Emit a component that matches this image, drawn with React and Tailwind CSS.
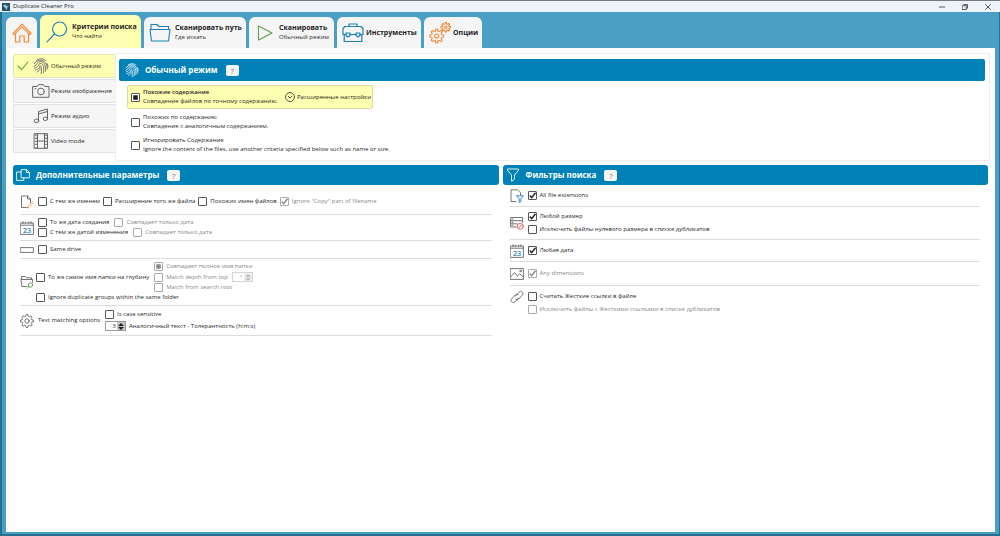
import React, { useState } from 'react';

const BLUE = '#1b7fb5';
const GRAY = '#666666';

const gearPath = (cx, cy, outer, inner, teeth = 8) => {
  const pts = [];
  const step = (Math.PI * 2) / teeth;
  for (let i = 0; i < teeth; i++) {
    const a = i * step;
    [[-0.3, inner], [-0.18, outer], [0.18, outer], [0.3, inner]].forEach(([k, r]) => {
      pts.push(`${(cx + Math.cos(a + k * step) * r).toFixed(2)} ${(cy + Math.sin(a + k * step) * r).toFixed(2)}`);
    });
  }
  return `M${pts.join('L')}Z`;
};

const Icon = ({ className = 'w-4 h-4', box = '0 0 16 16', color = GRAY, width = 1, children }) => (
  <svg viewBox={box} className={`shrink-0 ${className}`} fill="none" stroke={color} strokeWidth={width} strokeLinejoin="round" strokeLinecap="round" aria-hidden="true">
    {children}
  </svg>
);

const HomeIcon = () => (
  <Icon className="w-5 h-5" box="0 0 20 20" color="#f08a3c" width={1.2}>
    <path d="M1 10.5 10 1.2l9 9.3-1.2 1.2L10 3.8l-7.8 7.9z" />
    <path d="M3.5 11v8h4.3v-6h4.4v6h4.3v-8" />
  </Icon>
);

const SearchIcon = () => (
  <Icon className="w-[22px] h-[22px]" box="0 0 22 22" color={BLUE} width={1.1}>
    <circle cx="13.6" cy="8" r="7" />
    <path d="M8.6 13 1 20.8" />
  </Icon>
);

const FolderIcon = () => (
  <Icon className="w-[22px] h-5" box="0 0 22 20" color={BLUE} width={1.1}>
    <path d="M2.5 18 1 6.5h20L19.5 18zM2 6.5V1.5h6l2 2h9.5v3" />
  </Icon>
);

const PlayIcon = () => (
  <Icon className="w-4 h-4" color="#5fa04e" width={1.1}>
    <path d="M1.5 1v14L15 8z" />
  </Icon>
);

const ToolboxIcon = () => (
  <Icon className="w-[22px] h-5" box="0 0 22 20" color={BLUE} width={1.2}>
    <path d="M7 3.500V1h8v2.500M1 11.500v-6l2-2h16l2 2v6h-3M4 11.500H1M8 11.500h6" />
    <path d="M2.200 11.500v7h17.600v-7" />
    <path d="M4 10h4v2.500l-2 1.500-2-1.500zM14 10h4v2.500l-2 1.500-2-1.500z" />
  </Icon>
);

const GearsIcon = () => (
  <Icon className="w-[22px] h-[22px]" box="0 0 22 22" color="#f08a3c" width={1.1}>
    <path d={gearPath(7.7, 14, 7, 5.2)} />
    <circle cx="7.7" cy="14" r="2" />
    <path d={gearPath(16.8, 5.2, 4.8, 3.4)} />
    <circle cx="16.8" cy="5.2" r="1.2" />
  </Icon>
);

const FingerprintIcon = ({ color = GRAY, className }) => (
  <Icon className={className} color={color} width={0.9}>
    <path d="M3.6 2.4C6.2.2 10.2.2 12.6 2.6" />
    <path d="M1.400 5.600C3.600 1.400 9.800.900 12.500 4.700c1.300 1.900 1.800 4 1.700 6.600" />
    <path d="M1.200 8.200C4.200 7.800 3.400 3.600 7.500 3.600c4.400 0 5.400 4.500 4.900 9.700" />
    <path d="M1.600 10.200C6 9.600 4.700 5.500 7.600 5.500c3.200 0 3.600 4.800 2.800 9.300" />
    <path d="M2.500 12.100C6.600 11 6.400 9 7.200 7.500c1.500 1 1.600 4.500.9 8M4 14c2-.8 2.800-2 3.100-3.600" />
    <path d="M14.200 5.500c.6 1.200.8 2.400.8 3.600" />
  </Icon>
);

const CameraIcon = () => (
  <Icon className="w-[18px] h-[14px]" box="0 0 18 14">
    <path d="M1 2.500h4.200L6.500.700h5l1.300 1.800H17v10.800H1zM3 4.700h1" />
    <circle cx="9" cy="7.500" r="3.400" />
  </Icon>
);

const MusicIcon = () => (
  <Icon>
    <path d="M5.500 12.500v-9l9-2.500v9.500M5.500 6l9-2.500" />
    <ellipse cx="3.500" cy="12.800" rx="2.200" ry="1.800" />
    <ellipse cx="12.400" cy="10.800" rx="2.200" ry="1.800" />
  </Icon>
);

const FilmIcon = () => (
  <Icon>
    <path d="M1.500.700h13v14.600h-13zM4.500.700v14.600M11.500.700v14.600M4.500 8h7" />
    <path d="M3 1.500v13M13 1.500v13" strokeDasharray="1.300 1.800" strokeWidth="1.500" strokeLinecap="butt" />
  </Icon>
);

const CopyIcon = () => (
  <Icon className="w-[14px] h-3" box="0 0 14 12" color="#fff" width={0.9}>
    <path d="M5.500.600h5l2.900 2.800v5.400H5.500zM10.300.600v3h3" />
    <path d="M5.500 3H.600v8.400h7.200V8.800" />
  </Icon>
);

const FunnelIcon = () => (
  <Icon className="w-3 h-[14px]" box="0 0 12 14" color="#fff" width={0.9}>
    <path d="M.600 1h10.800v1.500L7.500 7v4.200l-3 2V7L.600 2.500z" />
  </Icon>
);

const RenameIcon = () => (
  <Icon className="w-[14px] h-[14px]" box="0 0 14 14" width={0.9}>
    <path d="M7.500 12.500H1.500V1h6l3 3v4M7.500 1v3h3" />
    <path d="m7.500 12.800.700-2.200 4-4 1.300 1.300-4 4z" stroke="#e8a55a" />
  </Icon>
);

const CalendarIcon = () => (
  <Icon className="w-[14px] h-[14px]" box="0 0 14 14" width={0.9}>
    <path d="M.600 2h12.800v11.400H.600zM.600 4.200h12.800M3 .600v2M11 .600v2M5.500 1.200v1M8.500 1.200v1" />
    <text x="7" y="12" textAnchor="middle" fontSize="7" fontFamily="Open Sans, sans-serif" fill={BLUE} stroke={BLUE} strokeWidth=".2">23</text>
  </Icon>
);

const DriveIcon = () => (
  <Icon className="w-[14px] h-[6px]" box="0 0 14 6" width={0.9}>
    <path d="M.600.600h12.800v4.800H.600z" />
  </Icon>
);

const FolderSearchIcon = () => (
  <Icon className="w-[14px] h-[14px]" box="0 0 14 14" width={0.9}>
    <path d="M7 11.500H2L.800 4.500h12l-.4 3M1.500 4.500v-3h4l1 1.300h5v1.700" />
    <circle cx="10.500" cy="10" r="2.200" stroke="#5fa04e" />
    <path d="m9 11.600-1.800 1.800" stroke="#5fa04e" />
  </Icon>
);

const GearIcon = () => (
  <Icon className="w-[14px] h-[14px]" box="0 0 14 14" width={0.9}>
    <path d={gearPath(7, 7, 6.5, 5)} />
    <circle cx="7" cy="7" r="2.200" />
  </Icon>
);

const FileFilterIcon = () => (
  <Icon className="w-[14px] h-[14px]" box="0 0 14 14" width={0.9}>
    <path d="M6 12.500H1V.800h6.500l3 3V6" />
    <path d="M6.700 6.800h6.600l-2.400 3v2.800l-1.700.800V9.800z" stroke={BLUE} />
  </Icon>
);

const SizeIcon = () => (
  <Icon className="w-[14px] h-[14px]" box="0 0 14 14" width={0.9}>
    <path d="M6.500 11H.600V1.500h12v5M.600 4.700h12M.600 7.800h6.500M2 3.100h1M2 6.200h1M2 9.300h1" />
    <circle cx="10.300" cy="10.300" r="3" stroke="#d9534a" />
    <path d="m9 11.600 2.600-2.600" stroke="#d9534a" />
  </Icon>
);

const ImageIcon = () => (
  <Icon className="w-[14px] h-3" box="0 0 14 12" width={0.9}>
    <path d="M.600.600h12.800v10.800H.600zM.600 9l4-4.500 2.600 3.500 2.400-2.200L13.400 9" />
    <circle cx="10.500" cy="3" r=".800" />
  </Icon>
);

const LinkIcon = () => (
  <Icon className="w-[14px] h-[14px]" box="0 0 14 14" width={0.9}>
    <path d="M5.500 6.200 9 2.200c2.200-2.200 5.200.600 3.400 2.800L8.800 9c-1 1-2.400.900-3.200.1" />
    <path d="M8.500 7.800 5 11.800c-2.200 2.200-5.200-.600-3.400-2.800L5.200 5c1-1 2.400-.900 3.200-.1" />
  </Icon>
);

// mark: "tick" for a checked box, "fill" for the square radio-like state
const Check = ({ label, on = false, mark = 'tick', disabled = false, children }) => {
  const [checked, setChecked] = useState(on);
  return (
    <label className={`flex items-center gap-[3px] whitespace-nowrap ${disabled ? 'text-[#888888]' : 'text-[#1f1f1f]'}`}>
      <span className="relative w-[9px] h-[9px] shrink-0">
        <input
          type="checkbox"
          checked={checked}
          disabled={disabled}
          onChange={e => setChecked(e.target.checked)}
          className="block appearance-none w-[9px] h-[9px] bg-white border border-[#555555] disabled:border-[#aaaaaa] rounded-[1px]"
        />
        {checked && (
          <svg viewBox="0 0 9 9" className="absolute inset-0 w-[9px] h-[9px] pointer-events-none" fill="none" stroke="currentColor" strokeWidth="1.4">
            {mark === 'tick' ? <path d="M1.800 4.500 3.700 6.600 7.500 1.800" /> : <path d="M2.500 2.500h4v4h-4z" fill="currentColor" strokeWidth=".5" />}
          </svg>
        )}
      </span>
      {children || <span>{label}</span>}
    </label>
  );
};

const Spinner = ({ value, label, disabled = false }) => (
  <span className={`flex w-[21px] h-[10px] border ${disabled ? 'border-[#d5d5d5] text-[#bbbbbb]' : 'border-[#999999]'}`}>
    <input type="number" defaultValue={value} aria-label={label} disabled={disabled}
      className="w-[11px] min-w-0 bg-white text-right pr-px leading-[8px] [appearance:textfield] [&::-webkit-inner-spin-button]:appearance-none" />
    <span className={`flex-1 flex flex-col ${disabled ? 'bg-[#f0f0f0]' : 'bg-[#c8c8c8]'}`}>
      <button type="button" disabled={disabled} aria-label={`${label} +`} className="flex-1 flex items-center justify-center">
        <svg viewBox="0 0 6 3" className="w-[6px] h-[3px]" fill="currentColor"><path d="M3 0 6 3H0z" /></svg>
      </button>
      <button type="button" disabled={disabled} aria-label={`${label} -`} className="flex-1 flex items-center justify-center">
        <svg viewBox="0 0 6 3" className="w-[6px] h-[3px]" fill="currentColor"><path d="M0 0h6L3 3z" /></svg>
      </button>
    </span>
  </span>
);

const Tab = ({ icon, title, sub, active, className = '' }) => (
  <button type="button" className={`flex items-center text-left rounded-t-[6px] whitespace-nowrap ${active ? 'h-[33px] bg-[#ffffb2]' : 'h-[31px] bg-[#f5f5f5]'} ${className}`}>
    {icon}
    {title && (
      <span className="flex flex-col">
        <span className="text-[7px] leading-[10px] font-bold">{title}</span>
        {sub && <span className="text-[6px] leading-[9px]">{sub}</span>}
      </span>
    )}
  </button>
);

const SectionHeader = ({ icon, title, className = '' }) => (
  <div className={`flex items-center bg-[#0082b8] text-white ${className}`}>
    <span className="flex w-[14px] shrink-0 justify-center mr-[6px]">{icon}</span>
    <h2 className="text-[8px] leading-3 font-bold">{title}</h2>
    <button type="button" aria-label="?" className="ml-2 w-[13px] h-[11px] rounded-[2px] bg-[#f5f5f5] text-[#777777] text-[8px] leading-[11px]">?</button>
  </div>
);

const Mode = ({ icon, label, active }) => (
  <button type="button" className={`flex items-center h-6 border border-r-0 rounded-l-[2px] whitespace-nowrap text-left ${active ? 'bg-[#ffffb2] border-[#e4e4b8]' : 'bg-[#f5f5f5] border-[#e2e2e2]'}`}>
    <span className="w-[18px] flex justify-center">
      {active && <Icon className="w-3 h-[10px]" box="0 0 12 10" color="#5fa04e" width={1.1}><path d="m1 5 3.500 3.700L11 1" /></Icon>}
    </span>
    <span className="w-[18px] flex justify-center mr-px">{icon}</span>
    {label}
  </button>
);

const Row = ({ icon, className = '', children }) => (
  <div className={`flex items-center border-b border-[#dcdcdc] ${className}`}>
    <span className="w-[14px] mr-1 shrink-0 flex justify-center">{icon}</span>
    {children}
  </div>
);

export default function App() {
  return (
    <div className="min-h-screen flex flex-col bg-[#4a9fc6] border-l-2 border-b-2 border-r border-[#27708f] font-['Open_Sans','Noto_Sans',sans-serif] text-[6px] leading-[9px] text-[#1f1f1f]">
      <header className="-ml-0.5 -mr-px flex items-center h-3 shrink-0 bg-[#eef3f8] border-t border-[#777783] pl-0.5">
        <svg viewBox="0 0 9 9" className="w-2 h-2" aria-hidden="true">
          <path d="M0 0h9v9H0z" fill="#244d69" />
          <path d="m1 3 3-1.500 1 2 3-.5-2 2-.5 3-2-2.500z" fill="#9fc5dc" />
        </svg>
        <h1 className="ml-[3px] flex-1">Duplicate Cleaner Pro</h1>
        <div className="flex items-center gap-[17px] pr-[9px]">
          <button type="button" aria-label="Свернуть"><Icon className="w-[6px] h-[6px]" box="0 0 6 6" color="#333" width={0.8}><path d="M0 3h6" /></Icon></button>
          <button type="button" aria-label="Восстановить"><Icon className="w-[6px] h-[6px]" box="0 0 6 6" color="#333" width={0.8}><path d="M.500 1.700h3.800v3.800H.500zM1.800.500h3.700v3.700" /></Icon></button>
          <button type="button" aria-label="Закрыть"><Icon className="w-[6px] h-[6px]" box="0 0 6 6" color="#333" width={0.8}><path d="m.500.500 5 5M5.500.500l-5 5" /></Icon></button>
        </div>
      </header>

      <nav className="flex items-end h-9 shrink-0 pl-1 gap-[3px]">
        <Tab icon={<HomeIcon />} className="w-[31px] justify-center" />
        <Tab active icon={<SearchIcon />} title="Критерии поиска" sub="Что найти" className="w-[101px] pl-[6px] gap-1" />
        <Tab icon={<FolderIcon />} title="Сканировать путь" sub="Где искать" className="w-[102px] pl-[5px] gap-1" />
        <Tab icon={<PlayIcon />} title="Сканировать" sub="Обычный режим" className="w-[85px] pl-2 gap-[6px]" />
        <Tab icon={<ToolboxIcon />} title="Инструменты" className="w-[84px] pl-[5px] gap-[2px]" />
        <Tab icon={<GearsIcon />} title="Опции" className="w-[58px] pl-[5px] gap-[2px]" />
      </nav>

      <main className="flex-1 bg-white mx-1 mb-0.5 pl-[7px] pr-[5px] pt-[5px]">
        {/* scan mode */}
        <div className="flex">
          <div className="w-[102px] shrink-0 flex flex-col gap-px pt-px">
            <Mode active icon={<FingerprintIcon />} label="Обычный режим" />
            <Mode icon={<CameraIcon />} label="Режим изображения" />
            <Mode icon={<MusicIcon />} label="Режим аудио" />
            <Mode icon={<FilmIcon />} label="Video mode" />
          </div>
          <section className="flex-1 border border-[#eeeeee] px-[3px] pt-[5px] pb-[6px]">
            <SectionHeader icon={<FingerprintIcon color="#fff" className="w-[14px] h-[14px]" />} title="Обычный режим" className="h-[22px] pl-[6px] rounded-[2px] mr-px" />
            <div className="ml-2 mt-1 flex w-[246px] h-6 items-center border border-[#dcdca0] bg-[#ffffb2] rounded-[2px] pl-[3px]">
              <div className="w-[154px]">
                <Check on mark="fill">
                  <span><b className="font-semibold">Похожие содержание</b><br />Совпадение файлов по точному содержанию.</span>
                </Check>
              </div>
              <button type="button" className="flex items-center gap-[2px] whitespace-nowrap">
                <Icon className="w-[10px] h-[10px]" box="0 0 10 10" color="#333" width={0.8}>
                  <circle cx="5" cy="5" r="4.500" />
                  <path d="m3.300 4.300 1.700 1.700 1.700-1.700" />
                </Icon>
                Расширенные настройки
              </button>
            </div>
            <div className="ml-3 mt-1 flex flex-col gap-[5px]">
              <Check><span>Похожих по содержанию<br />Совпадение с аналогичным содержанием.</span></Check>
              <Check><span>Игнорировать Содержание<br />Ignore the content of the files, use another criteria specified below such as name or size.</span></Check>
            </div>
          </section>
        </div>

        <div className="grid grid-cols-2 gap-1 mt-1 pr-0.5">
          <section>
            <SectionHeader icon={<CopyIcon />} title="Дополнительные параметры" className="h-5 pl-[3px] rounded-[3px]" />
            <div className="ml-[7px] mr-[7px]">
              <Row icon={<RenameIcon />} className="h-[30px] pt-1">
                <div className="flex gap-[3px]">
                  <Check label="С тем же именем" />
                  <Check label="Расширение того же файла" />
                  <Check label="Похожих имен файлов" />
                  <Check label={'Ignore "Copy" part of filename'} on disabled />
                </div>
              </Row>
              <Row icon={<CalendarIcon />} className="h-[26px]">
                <div className="flex flex-col gap-px">
                  <div className="flex gap-[5px]"><Check label="То же дата создания" /><Check label="Совпадает только дата" disabled /></div>
                  <div className="flex gap-[5px]"><Check label="С тем же датой изменения" /><Check label="Совпадает только дата" disabled /></div>
                </div>
              </Row>
              <Row icon={<DriveIcon />} className="h-[18px]"><Check label="Same drive" /></Row>
              <Row icon={<FolderSearchIcon />} className="h-[47px]">
                <div className="-ml-0.5 flex flex-col gap-px">
                  <div className="flex items-center gap-[5px]">
                    <Check label="То же самое имя папки на глубину" />
                    <div className="flex flex-col gap-px">
                      <Check label="Совпадает полное имя папки" on mark="fill" disabled />
                      <div className="flex items-center gap-1 h-[10px]"><Check label="Match depth from top" disabled /><Spinner value={1} label="Match depth" disabled /></div>
                      <Check label="Match from search root" disabled />
                    </div>
                  </div>
                  <Check label="Ignore duplicate groups within the same folder" />
                </div>
              </Row>
              <Row icon={<GearIcon />} className="h-[30px]">
                <span className="w-[67px]">Text matching options</span>
                <div className="flex flex-col gap-[2px]">
                  <Check label="Is case sensitive" />
                  <div className="flex items-center gap-[3px]"><Spinner value={3} label="Толерантность" />Аналогичный текст - Толерантность (h:m:s)</div>
                </div>
              </Row>
            </div>
          </section>

          <section>
            <SectionHeader icon={<FunnelIcon />} title="Фильтры поиска" className="h-5 pl-[3px] rounded-[3px]" />
            <div className="ml-[7px] mr-2">
              <Row icon={<FileFilterIcon />} className="h-[22px]"><Check label="All file extensions" on /></Row>
              <Row icon={<SizeIcon />} className="h-[33px]">
                <div className="flex flex-col gap-1">
                  <Check label="Любой размер" on />
                  <Check label="Исключить файлы нулевого размера в списке дубликатов" />
                </div>
              </Row>
              <Row icon={<CalendarIcon />} className="h-[22px]"><Check label="Любая дата" on /></Row>
              <Row icon={<ImageIcon />} className="h-6"><Check label="Any dimensions" on disabled /></Row>
              {/* last group has no rule under it */}
              <div className="flex items-start pt-1">
                <span className="w-[14px] mr-1 shrink-0 flex justify-center"><LinkIcon /></span>
                <div className="flex flex-col gap-1 pt-0.5">
                  <Check label="Считать Жесткие ссылки в файле" />
                  <Check label="Исключить файлы с Жесткими ссылками в списке дубликатов" disabled />
                </div>
              </div>
            </div>
          </section>
        </div>
      </main>
    </div>
  );
}
